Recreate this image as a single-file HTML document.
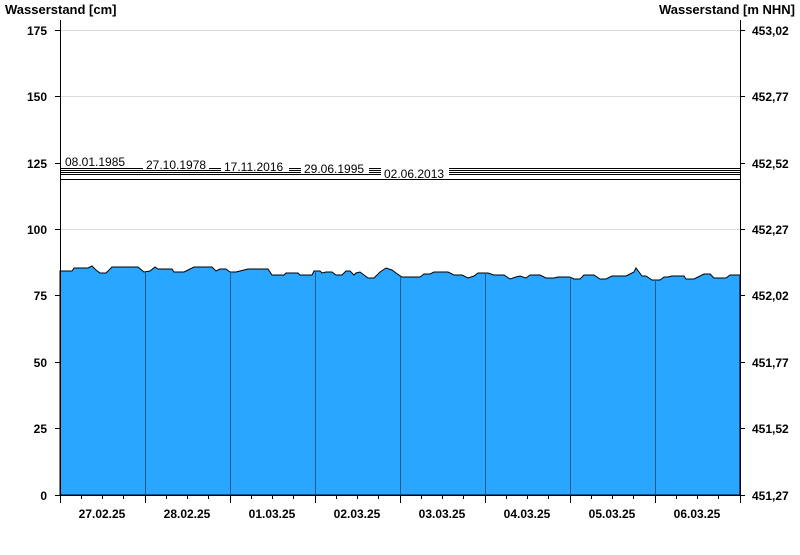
<!DOCTYPE html>
<html><head><meta charset="utf-8"><style>
body{margin:0;background:#fff}
svg text{font-family:"Liberation Sans",Arial,sans-serif}
</style></head><body>
<svg width="800" height="550" xmlns="http://www.w3.org/2000/svg">
<rect width="800" height="550" fill="#fff"/>
<text x="5" y="14" font-size="13" font-weight="bold">Wasserstand [cm]</text>
<text x="795" y="14" font-size="13" font-weight="bold" text-anchor="end">Wasserstand [m NHN]</text>
<g stroke="#dcdcdc" stroke-width="1">
<line x1="61" x2="740" y1="30.5" y2="30.5"/><line x1="61" x2="740" y1="96.5" y2="96.5"/>
<line x1="61" x2="740" y1="229.5" y2="229.5"/>
</g>
<polygon fill="#29a6ff" stroke="#000" stroke-width="1" points="60,495 60,271 72,271 74,268 88,268 92,266 96,270 100,273 106,273 112,267 138,267 144,272 150,271 155,267 158,269 172,269 174,272 184,272 186,271 194,267 212,267 216,271 220,269 226,269 230,272 236,272 248,269 268,269 272,275 284,275 286,273 298,273 300,275 312,275 314,271 320,271 322,273 326,272 332,272 336,275 342,275 346,271 350,271 354,275 356,273 360,272 364,275 368,278 374,278 380,272 386,268 392,270 396,273 402,277 420,277 424,274 430,274 434,272 448,272 454,275 462,275 468,278 474,276 478,273 488,273 494,275 504,275 510,279 516,277 520,276 526,278 530,275 540,275 546,278 554,278 558,277 570,277 574,279 580,279 584,275 594,275 600,279 606,279 612,276 626,276 630,274 634,272 636,268 642,276 646,276 652,280 660,280 664,277 668,277 672,276 684,276 686,279 694,279 698,277 704,274 710,274 714,278 722,278 726,278 730,275 740,275 740,495"/>
<g stroke="#1d5d8a" stroke-width="1">
<line x1="145.5" x2="145.5" y1="272" y2="495"/><line x1="230.5" x2="230.5" y1="272" y2="495"/><line x1="315.5" x2="315.5" y1="272" y2="495"/><line x1="400.5" x2="400.5" y1="277" y2="495"/><line x1="485.5" x2="485.5" y1="273" y2="495"/><line x1="570.5" x2="570.5" y1="277" y2="495"/><line x1="655.5" x2="655.5" y1="280" y2="495"/>
</g>
<g stroke="#000" stroke-width="1">
<line x1="61" x2="740" y1="168.5" y2="168.5"/><line x1="61" x2="740" y1="170.5" y2="170.5"/><line x1="61" x2="740" y1="172.5" y2="172.5"/><line x1="61" x2="740" y1="174.5" y2="174.5"/><line x1="61" x2="740" y1="179.5" y2="179.5"/>
</g>
<g font-size="12" fill="#000">
<rect x="63" y="155" width="64" height="13" fill="#fff"/><text x="65" y="166">08.01.1985</text>
<rect x="143" y="158" width="66" height="12" fill="#fff"/><text x="146" y="169">27.10.1978</text>
<rect x="221" y="160" width="68" height="12" fill="#fff"/><text x="224" y="171">17.11.2016</text>
<rect x="301" y="162" width="68" height="12" fill="#fff"/><text x="304" y="173">29.06.1995</text>
<rect x="381" y="166" width="68" height="13" fill="#fff"/><text x="384" y="178">02.06.2013</text>
</g>
<g stroke="#000" stroke-width="1">
<line x1="60.5" x2="60.5" y1="20" y2="496"/><line x1="740.5" x2="740.5" y1="20" y2="496"/>
<line x1="55" x2="745" y1="495.5" y2="495.5"/>
</g>
<g stroke="#000">
<line x1="55" x2="60" y1="30.5" y2="30.5"/><line x1="55" x2="60" y1="96.5" y2="96.5"/><line x1="55" x2="60" y1="163.5" y2="163.5"/><line x1="55" x2="60" y1="229.5" y2="229.5"/><line x1="55" x2="60" y1="295.5" y2="295.5"/><line x1="55" x2="60" y1="362.5" y2="362.5"/><line x1="55" x2="60" y1="428.5" y2="428.5"/>
<line x1="740" x2="745" y1="30.5" y2="30.5"/><line x1="740" x2="745" y1="96.5" y2="96.5"/><line x1="740" x2="745" y1="163.5" y2="163.5"/><line x1="740" x2="745" y1="229.5" y2="229.5"/><line x1="740" x2="745" y1="295.5" y2="295.5"/><line x1="740" x2="745" y1="362.5" y2="362.5"/><line x1="740" x2="745" y1="428.5" y2="428.5"/>
</g>
<g font-size="12" font-weight="bold" text-anchor="end">
<text x="47" y="35">175</text><text x="47" y="101">150</text><text x="47" y="168">125</text><text x="47" y="234">100</text><text x="47" y="300">75</text><text x="47" y="367">50</text><text x="47" y="433">25</text><text x="47" y="500">0</text>
</g>
<g font-size="12" font-weight="bold">
<text x="752" y="35">453,02</text><text x="752" y="101">452,77</text><text x="752" y="168">452,52</text><text x="752" y="234">452,27</text><text x="752" y="300">452,02</text><text x="752" y="367">451,77</text><text x="752" y="433">451,52</text><text x="752" y="500">451,27</text>
</g>
<g stroke="#000">
<line x1="60.5" x2="60.5" y1="495" y2="503"/><line x1="145.5" x2="145.5" y1="495" y2="503"/><line x1="230.5" x2="230.5" y1="495" y2="503"/><line x1="315.5" x2="315.5" y1="495" y2="503"/><line x1="400.5" x2="400.5" y1="495" y2="503"/><line x1="485.5" x2="485.5" y1="495" y2="503"/><line x1="570.5" x2="570.5" y1="495" y2="503"/><line x1="655.5" x2="655.5" y1="495" y2="503"/><line x1="740.5" x2="740.5" y1="495" y2="503"/>
<path d="M81.5 495v4M102.5 495v4M123.5 495v4M166.5 495v4M187.5 495v4M208.5 495v4M251.5 495v4M272.5 495v4M293.5 495v4M336.5 495v4M357.5 495v4M378.5 495v4M421.5 495v4M442.5 495v4M463.5 495v4M506.5 495v4M527.5 495v4M548.5 495v4M591.5 495v4M612.5 495v4M633.5 495v4M676.5 495v4M697.5 495v4M718.5 495v4"/>
</g>
<g font-size="12" font-weight="bold" text-anchor="middle">
<text x="102" y="518">27.02.25</text><text x="187" y="518">28.02.25</text><text x="272" y="518">01.03.25</text><text x="357" y="518">02.03.25</text><text x="442" y="518">03.03.25</text><text x="527" y="518">04.03.25</text><text x="612" y="518">05.03.25</text><text x="697" y="518">06.03.25</text>
</g>
</svg>
</body></html>
